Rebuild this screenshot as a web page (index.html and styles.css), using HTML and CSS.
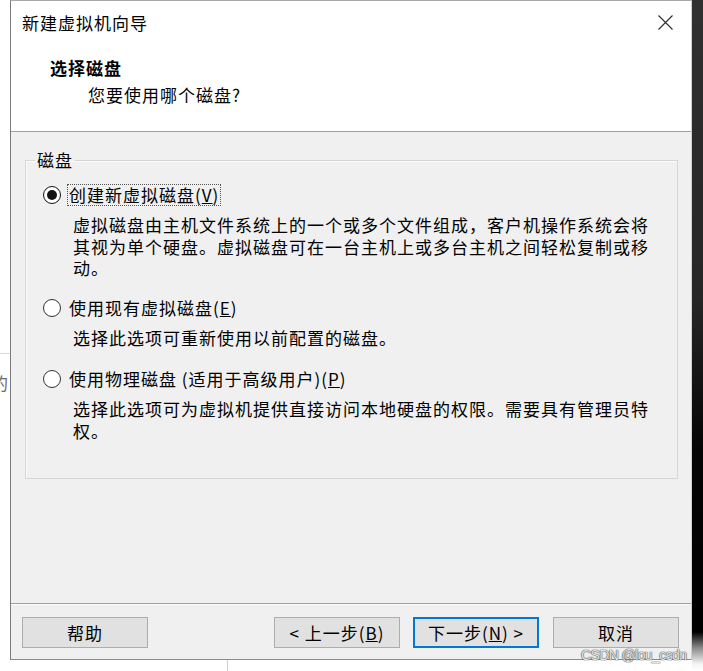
FILE: index.html
```html
<!DOCTYPE html>
<html lang="zh-CN">
<head>
<meta charset="utf-8">
<title>新建虚拟机向导</title>
<link rel="stylesheet" href="styles.css">
</head>
<body>
<div class="screen">
  <div class="gutter">
    <div class="gutter-top"></div>
    <div class="gutter-line"></div>
    <div class="gutter-text">的</div>
  </div>
  <div class="main">
    <div class="dialog">
      <div class="titlebar">
        <span class="title">新建虚拟机向导</span>
        <svg class="close" width="15" height="15" viewBox="0 0 15 15"><path d="M0.5 0.5 L14.5 14.5 M14.5 0.5 L0.5 14.5" stroke="#2b2b2b" stroke-width="1.1" fill="none"/></svg>
      </div>
      <div class="header">
        <div class="h-title">选择磁盘</div>
        <div class="h-sub">您要使用哪个磁盘?</div>
      </div>
      <div class="body">
        <fieldset class="group">
          <legend class="legend">磁盘</legend>
          <div class="options">
            <div class="opt">
              <div class="opt-label">
                <span class="radio checked"><span class="dot"></span></span>
                <span class="label focus">创建新虚拟磁盘(<u>V</u>)</span>
              </div>
              <div class="desc">虚拟磁盘由主机文件系统上的一个或多个文件组成，客户机操作系统会将其视为单个硬盘。虚拟磁盘可在一台主机上或多台主机之间轻松复制或移动。</div>
            </div>
            <div class="opt opt2">
              <div class="opt-label">
                <span class="radio"></span>
                <span class="label">使用现有虚拟磁盘(<u>E</u>)</span>
              </div>
              <div class="desc">选择此选项可重新使用以前配置的磁盘。</div>
            </div>
            <div class="opt opt3">
              <div class="opt-label">
                <span class="radio"></span>
                <span class="label">使用物理磁盘 (适用于高级用户)(<u>P</u>)</span>
              </div>
              <div class="desc">选择此选项可为虚拟机提供直接访问本地硬盘的权限。需要具有管理员特权。</div>
            </div>
          </div>
        </fieldset>
      </div>
      <div class="footer">
        <button class="btn btn-help">帮助</button>
        <button class="btn btn-back">&lt; 上一步(<u>B</u>)</button>
        <button class="btn btn-next">下一步(<u>N</u>) &gt;</button>
        <button class="btn btn-cancel">取消</button>
      </div>
    </div>
    <div class="below"><div class="below-line"></div></div>
  </div>
  <div class="edge"></div>
  <div class="watermark">CSDN @lou_csdn</div>
</div>
</body>
</html>
```
FILE: styles.css
```css
* { box-sizing: border-box; }
html, body { margin: 0; padding: 0; background: #fff; }
body {
  font-family: "Noto Sans CJK SC", "Noto Sans", sans-serif;
  font-size: 17px;
  color: #000;
  letter-spacing: 1px;
}
.screen {
  position: relative;
  display: flex;
  width: 703px;
  height: 671px;
  overflow: hidden;
}
.gutter {
  width: 10px;
  flex: none;
  display: flex;
  flex-direction: column;
  overflow: hidden;
}
.gutter-top { height: 353px; }
.gutter-line { height: 1px; background: #d8d8d8; }
.gutter-text {
  margin-top: 18px;
  margin-left: -9px;
  font-size: 17px;
  line-height: 22px;
  color: #6a6a6a;
  white-space: nowrap;
}
.main {
  width: 682px;
  flex: none;
  display: flex;
  flex-direction: column;
}
.dialog {
  height: 660px;
  border-left: 1px solid #7c7c7c;
  border-top: 1px solid #a8a8a8;
  border-right: 1px solid #cfcfcf;
  border-bottom: 1px solid #8a8a8a;
  display: flex;
  flex-direction: column;
  background: #f0f0f0;
}
.titlebar {
  height: 43px;
  flex: none;
  background: #fff;
  display: flex;
  align-items: center;
  justify-content: space-between;
  padding-left: 11px;
  padding-right: 18px;
}
.title { line-height: 22px; }
.close { display: block; }
.header {
  height: 88px;
  flex: none;
  background: #fff;
  border-bottom: 1px solid #a0a0a0;
  padding-top: 13px;
  padding-left: 39px;
}
.h-title { font-weight: 700; line-height: 22px; }
.h-sub { margin-top: 5px; margin-left: 38px; line-height: 22px; }
.body {
  height: 472px;
  flex: none;
  border-bottom: 1px solid #a0a0a0;
  padding: 17px 13px 0 14px;
}
.group {
  margin: 0;
  height: 330px;
  border: 1px solid #d6d6d6;
  box-shadow: inset 1px 1px 0 #fbfbfb;
  padding: 0 0 0 9px;
  min-width: 0;
}
.legend {
  padding: 0 2px;
  line-height: 22px;
}
.options { margin-top: 13px; }
.opt2 { margin-top: 18px; }
.opt3 { margin-top: 19px; }
.opt-label {
  display: flex;
  align-items: center;
  height: 22px;
  line-height: 20px;
}
.radio {
  width: 18px;
  height: 18px;
  flex: none;
  margin-left: 8px;
  border: 1.5px solid #333;
  border-radius: 50%;
  background: #fff;
  display: flex;
  align-items: center;
  justify-content: center;
}
.radio.checked { border-color: #111; }
.dot {
  width: 10px;
  height: 10px;
  border-radius: 50%;
  background: #111;
}
.label {
  margin-left: 6px;
  padding: 0 1px;
  border: 1px dotted transparent;
  white-space: nowrap;
}
.label.focus { border-color: #555; }
.desc {
  margin-top: 8px;
  margin-left: 38px;
  width: 586px;
  line-height: 21.7px;
}
.footer {
  flex: 1;
  border-top: 1px solid #fcfcfc;
  display: flex;
  align-items: flex-start;
  padding-top: 12px;
}
.btn {
  width: 126px;
  height: 31px;
  flex: none;
  background: #e1e1e1;
  border: 1px solid #adadad;
  font: inherit;
  letter-spacing: 1px;
  color: #000;
  padding: 0;
  line-height: 27px;
}
.btn-help { margin-left: 11px; }
.btn-back { margin-left: 126px; }
.btn-next { margin-left: 13px; border: 2px solid #0078d7; }
.btn-cancel { margin-left: 14px; }
.below {
  height: 11px;
  flex: none;
  background: #fff;
  display: flex;
}
.below-line {
  width: 1px;
  height: 11px;
  margin-left: 217px;
  background: #cfcfcf;
}
.edge {
  width: 11px;
  flex: none;
  background: linear-gradient(to bottom, #303030 0px, #262626 300px, #050505 450px, #000 632px, #8a8a8a 648px, #f4f4f4 664px, #fff 671px);
}
.watermark {
  position: absolute;
  left: 581px;
  top: 647px;
  font-family: "Liberation Sans", Arial, sans-serif;
  font-size: 14px;
  letter-spacing: -0.6px;
  line-height: 16px;
  color: #e6e6e6;
  text-shadow: 0 0 1px #555, 0 0 1px #555, 0 0 1px #555;
  white-space: nowrap;
}
```
